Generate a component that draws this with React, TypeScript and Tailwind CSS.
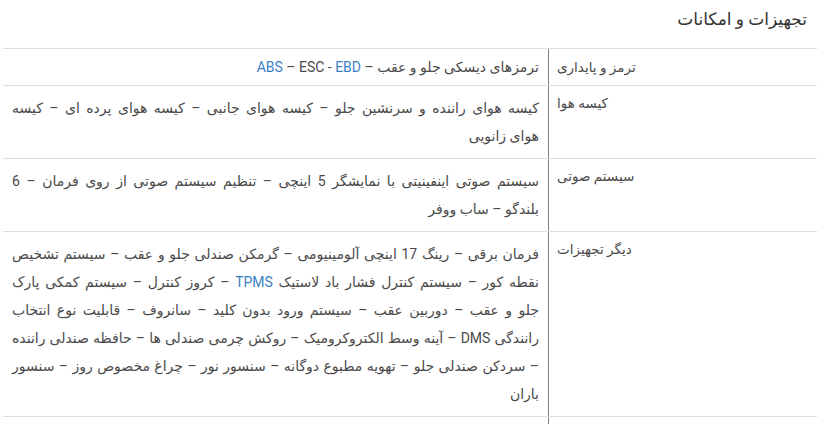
import React from "react";

type Part = { text: string; link?: boolean };

type Row = {
  label: string;
  lines: Part[][];
};

// each value is kept in the same lines as the reference, justified like the source page
const rows: Row[] = [
  {
    label: "ترمز و پایداری",
    lines: [
      [
        { text: "ترمزهای دیسکی جلو و عقب – " },
        { text: "ABS", link: true },
        { text: " – ESC - " },
        { text: "EBD", link: true },
      ],
    ],
  },
  {
    label: "کیسه هوا",
    lines: [
      [{ text: "کیسه هوای راننده و سرنشین جلو – کیسه هوای جانبی – کیسه هوای پرده ای – کیسه" }],
      [{ text: "هوای زانویی" }],
    ],
  },
  {
    label: "سیستم صوتی",
    lines: [
      [{ text: "سیستم صوتی اینفینیتی با نمایشگر 5 اینچی – تنظیم سیستم صوتی از روی فرمان – 6" }],
      [{ text: "بلندگو – ساب ووفر" }],
    ],
  },
  {
    label: "دیگر تجهیزات",
    lines: [
      [{ text: "فرمان برقی – رینگ 17 اینچی آلومینیومی – گرمکن صندلی جلو و عقب – سیستم تشخیص" }],
      [
        { text: "نقطه کور – سیستم کنترل فشار باد لاستیک " },
        { text: "TPMS", link: true },
        { text: " – کروز کنترل – سیستم کمکی پارک" },
      ],
      [{ text: "جلو و عقب – دوربین عقب – سیستم ورود بدون کلید – سانروف – قابلیت نوع انتخاب" }],
      [{ text: "رانندگی DMS – آینه وسط الکتروکرومیک – روکش چرمی صندلی ها – حافظه صندلی راننده" }],
      [{ text: "– سردکن صندلی جلو – تهویه مطبوع دوگانه – سنسور نور – چراغ مخصوص روز – سنسور" }],
      [{ text: "باران" }],
    ],
  },
];

const App = (): React.JSX.Element => {
  return (
    <div
      dir="rtl"
      className="w-[820px] h-[424px] overflow-hidden bg-white px-[3px] text-[#4a4a4a]"
      style={{ fontFamily: "Roboto, 'DejaVu Sans', sans-serif" }}
    >
      <h2 className="pt-[7px] pr-[10px] h-[48px] text-[17px] leading-6 font-normal text-[#333]">
        تجهیزات و امکانات
      </h2>

      <div className="flex flex-col">
        {rows.map((row, i) => (
          <div
            key={row.label}
            className="grid grid-cols-[269px_1fr] border-t border-[#dedede]"
          >
            <div
              className={`border-l border-[#7c7c7c] pl-[8px] pr-2 text-left text-[13.5px] leading-7 ${
                i === 0 ? "pt-[4px] pb-[4px]" : "pt-[3px]"
              }`}
            >
              {row.label}
            </div>
            <div
              className={`px-[9px] text-[14px] leading-7 ${
                i === 0 ? "pt-[4px] pb-[4px]" : "pt-[8px] pb-[8px]"
              }`}
            >
              {row.lines.map((line, j) => (
                <span
                  key={j}
                  className={`block whitespace-nowrap ${
                    j < row.lines.length - 1
                      ? "text-justify [text-align-last:justify]"
                      : ""
                  }`}
                >
                  {line.map((part, k) =>
                    part.link ? (
                      <span key={k} className="text-[#3b7fc4]">
                        {part.text}
                      </span>
                    ) : (
                      <span key={k}>{part.text}</span>
                    )
                  )}
                </span>
              ))}
            </div>
          </div>
        ))}

        {/* next row, cut off by the window */}
        <div className="grid grid-cols-[269px_1fr] border-t border-[#dedede] h-[40px]">
          <div className="border-l border-[#7c7c7c]" />
          <div />
        </div>
      </div>
    </div>
  );
};

export default App;
